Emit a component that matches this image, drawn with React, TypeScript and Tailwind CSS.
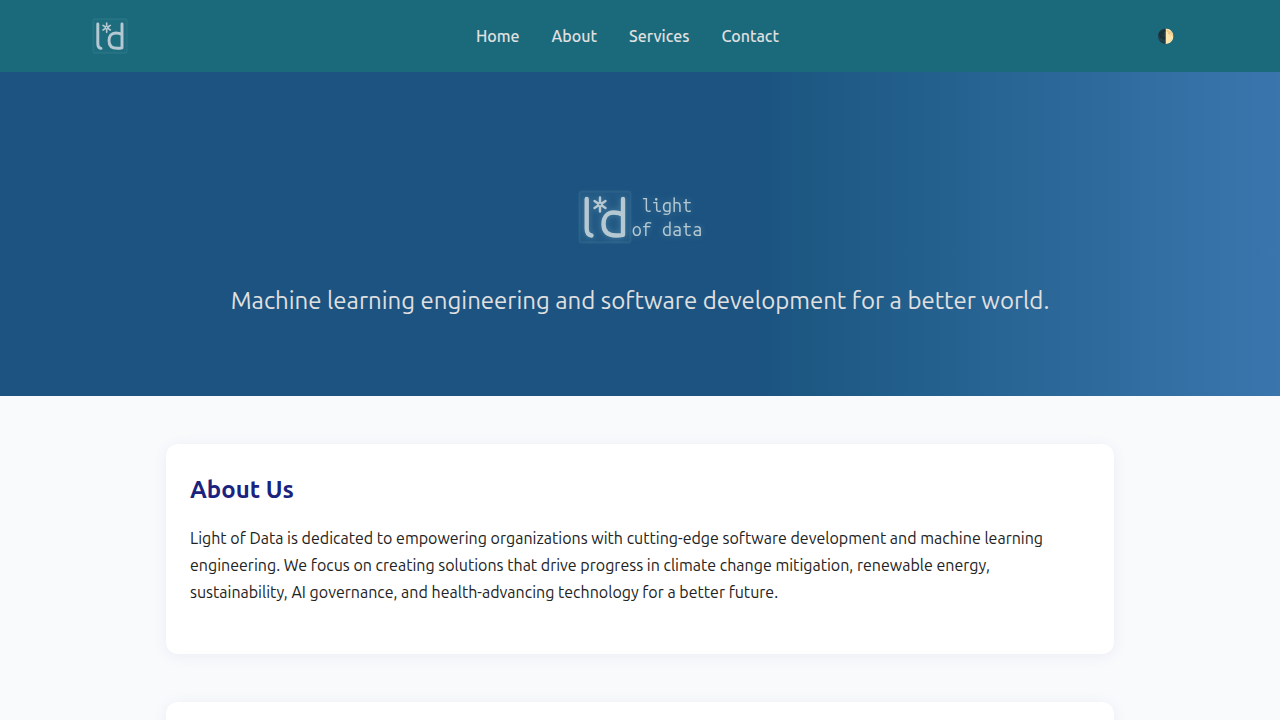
const links = ["Home", "About", "Services", "Contact"];

function Mark({ className }: { className: string }) {
  return (
    <svg viewBox="0 0 54 54" className={className} fill="none" aria-hidden="true">
      <rect x="1.5" y="1.5" width="51" height="51" rx="2" fill="#8fc4cf" fillOpacity="0.04" stroke="#8fc4cf" strokeOpacity="0.1" strokeWidth="2" />
      <g stroke="#b6c9d2" strokeLinecap="round">
        <path d="M8.700 9V38.500Q8.700 44.800 13.500 45.500" strokeWidth="4.400" />
        <path d="M45 9V44.800Q42 45.500 38 45.500C29.500 45.500 25.500 41.500 25.500 34C25.500 27 29.500 22.500 35.500 22.500Q41.500 22.500 45 25" strokeWidth="4.400" strokeLinejoin="round" />
        <path d="M22 7.500V12.500M22 16.500V21.500M16.500 11L20.200 13.500M23.800 15.500L27.500 18M27.500 11L23.800 13.500M20.200 15.500L16.500 18" strokeWidth="2.400" />
        <circle cx="22" cy="14.500" r="2" strokeWidth="1.500" />
      </g>
    </svg>
  );
}

function Card({ title, children }: { title: string; children: React.ReactNode }) {
  return (
    <section className="rounded-xl bg-white px-6 pt-7 pb-12 shadow-[0_2px_16px_rgba(26,35,126,0.06)]">
      <h2 className="mb-[17px] text-2xl leading-9 font-semibold text-[#1a237e]">{title}</h2>
      <p className="text-base leading-[27px] text-[#222222]">{children}</p>
    </section>
  );
}

export default function App() {
  return (
    <div className="h-screen overflow-hidden bg-[#f9fafc] font-[Ubuntu,Lato,sans-serif]">
      <header className="bg-[#1a6a7c]">
        <div className="mx-auto flex h-18 max-w-[1100px] items-center justify-between">
          <a href="#home" aria-label="Light of Data">
            <Mark className="ml-0.5 size-9" />
          </a>
          <nav className="mr-3.5 flex gap-8 text-base font-medium text-[#e0e0e0]">
            {links.map((link) => (
              <a key={link} href={`#${link.toLowerCase()}`}>
                {link}
              </a>
            ))}
          </nav>
          <button type="button" aria-label="Toggle theme" className="px-4 text-sm">
            🌓
          </button>
        </div>
      </header>
      <div className="flex flex-col items-center bg-[linear-gradient(90deg,#1c5380_0%,#1c5380_59%,#1d5883_63%,#2a6797_81%,#3a76ad_100%)] pt-[118px] pb-[77px]">
        <div className="flex items-center drop-shadow-[0_0_3px_rgba(143,196,207,0.35)]">
          <Mark className="size-[54px]" />
          <div className="text-center font-['Ubuntu_Mono','DejaVu_Sans_Mono',monospace] text-lg leading-6 text-[#b6c9d2]">
            light
            <br />
            of data
          </div>
        </div>
        <p className="mt-[39px] text-2xl leading-9 text-[#e0e0e0]">
          Machine learning engineering and software development for a better world.
        </p>
      </div>
      <main className="mx-auto flex max-w-[948px] flex-col gap-12 pt-12">
        <Card title="About Us">
          Light of Data is dedicated to empowering organizations with cutting-edge software development and machine
          learning engineering. We focus on creating solutions that drive progress in climate change mitigation,
          renewable energy, sustainability, AI governance, and health-advancing technology for a better future.
        </Card>
        <section className="h-48 rounded-xl bg-white shadow-[0_2px_16px_rgba(26,35,126,0.06)]" />
      </main>
    </div>
  );
}
